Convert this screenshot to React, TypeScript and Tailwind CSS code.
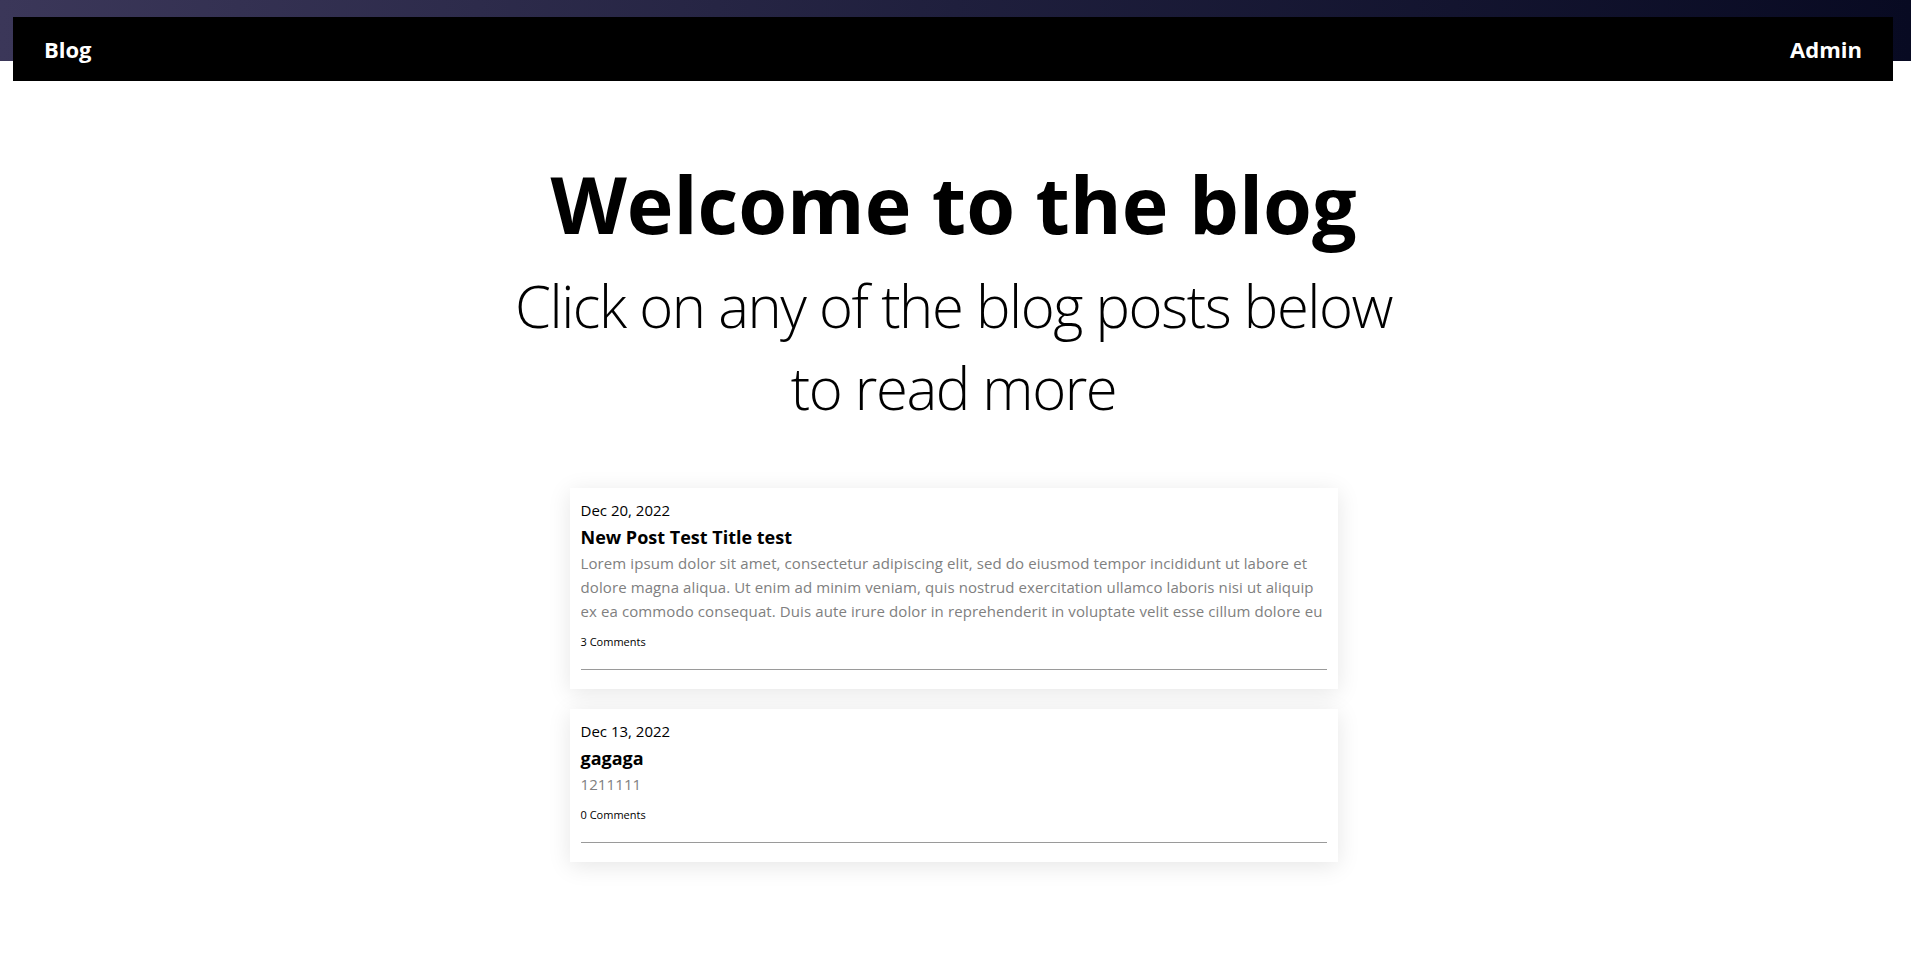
const posts = [
  {
    date: "Dec 20, 2022",
    title: "New Post Test Title test",
    body: "Lorem ipsum dolor sit amet, consectetur adipiscing elit, sed do eiusmod tempor incididunt ut labore et dolore magna aliqua. Ut enim ad minim veniam, quis nostrud exercitation ullamco laboris nisi ut aliquip ex ea commodo consequat. Duis aute irure dolor in reprehenderit in voluptate velit esse cillum dolore eu fugiat nulla pariatur. Excepteur sint occaecat cupidatat non proident, sunt in culpa qui officia deserunt mollit anim id est laborum.",
    comments: 3,
  },
  {
    date: "Dec 13, 2022",
    title: "gagaga",
    body: "1211111",
    comments: 0,
  },
];

function PostCard({ post }: { post: (typeof posts)[number] }) {
  return (
    <article className="bg-white pt-[10px] pb-[19px] px-[11px] shadow-[0_4px_22px_rgba(0,0,0,0.1)] cursor-pointer">
      <p className="text-[15px] leading-[25px] text-black">{post.date}</p>
      <h2 className="text-[18px] leading-[28px] font-bold text-black">{post.title}</h2>
      <p className="text-[15px] leading-[24px] tracking-[0.1px] text-[#808080] max-h-[72px] overflow-hidden">
        {post.body}
      </p>
      <p className="mt-[11px] text-[11px] leading-[16px] text-black">{post.comments} Comments</p>
      <hr className="mt-[19px] border-0 border-t border-[#9a9a9a]" />
    </article>
  );
}

export default function App() {
  return (
    <div className="min-h-screen bg-white font-['Open_Sans','Noto_Sans',sans-serif] text-black">
      {/* Header band + nav */}
      <header className="pt-[17px] pl-[13px] pr-[18px] bg-no-repeat bg-[length:100%_61px] bg-[linear-gradient(90deg,#3b3759_0%,#1f1f3d_50%,#080a22_100%)]">
        <nav className="h-[64px] bg-black flex items-center justify-between px-[31px]">
          <a className="text-white text-[22px] font-bold">Blog</a>
          <a className="text-white text-[22px] font-bold">Admin</a>
        </nav>
      </header>

      <main className="flex flex-col items-center -translate-x-[2px]">
        <h1 className="mt-[83px] text-[79px] leading-none font-bold text-center">Welcome to the blog</h1>
        <p className="mt-[22px] max-w-[930px] text-[58px] leading-[82px] font-light tracking-[-1.45px] text-center">
          Click on any of the blog posts below to read more
        </p>

        <div className="mt-[59px] mb-16 w-[768px] flex flex-col gap-[20px]">
          {posts.map((p) => (
            <PostCard key={p.date} post={p} />
          ))}
        </div>
      </main>
    </div>
  );
}
